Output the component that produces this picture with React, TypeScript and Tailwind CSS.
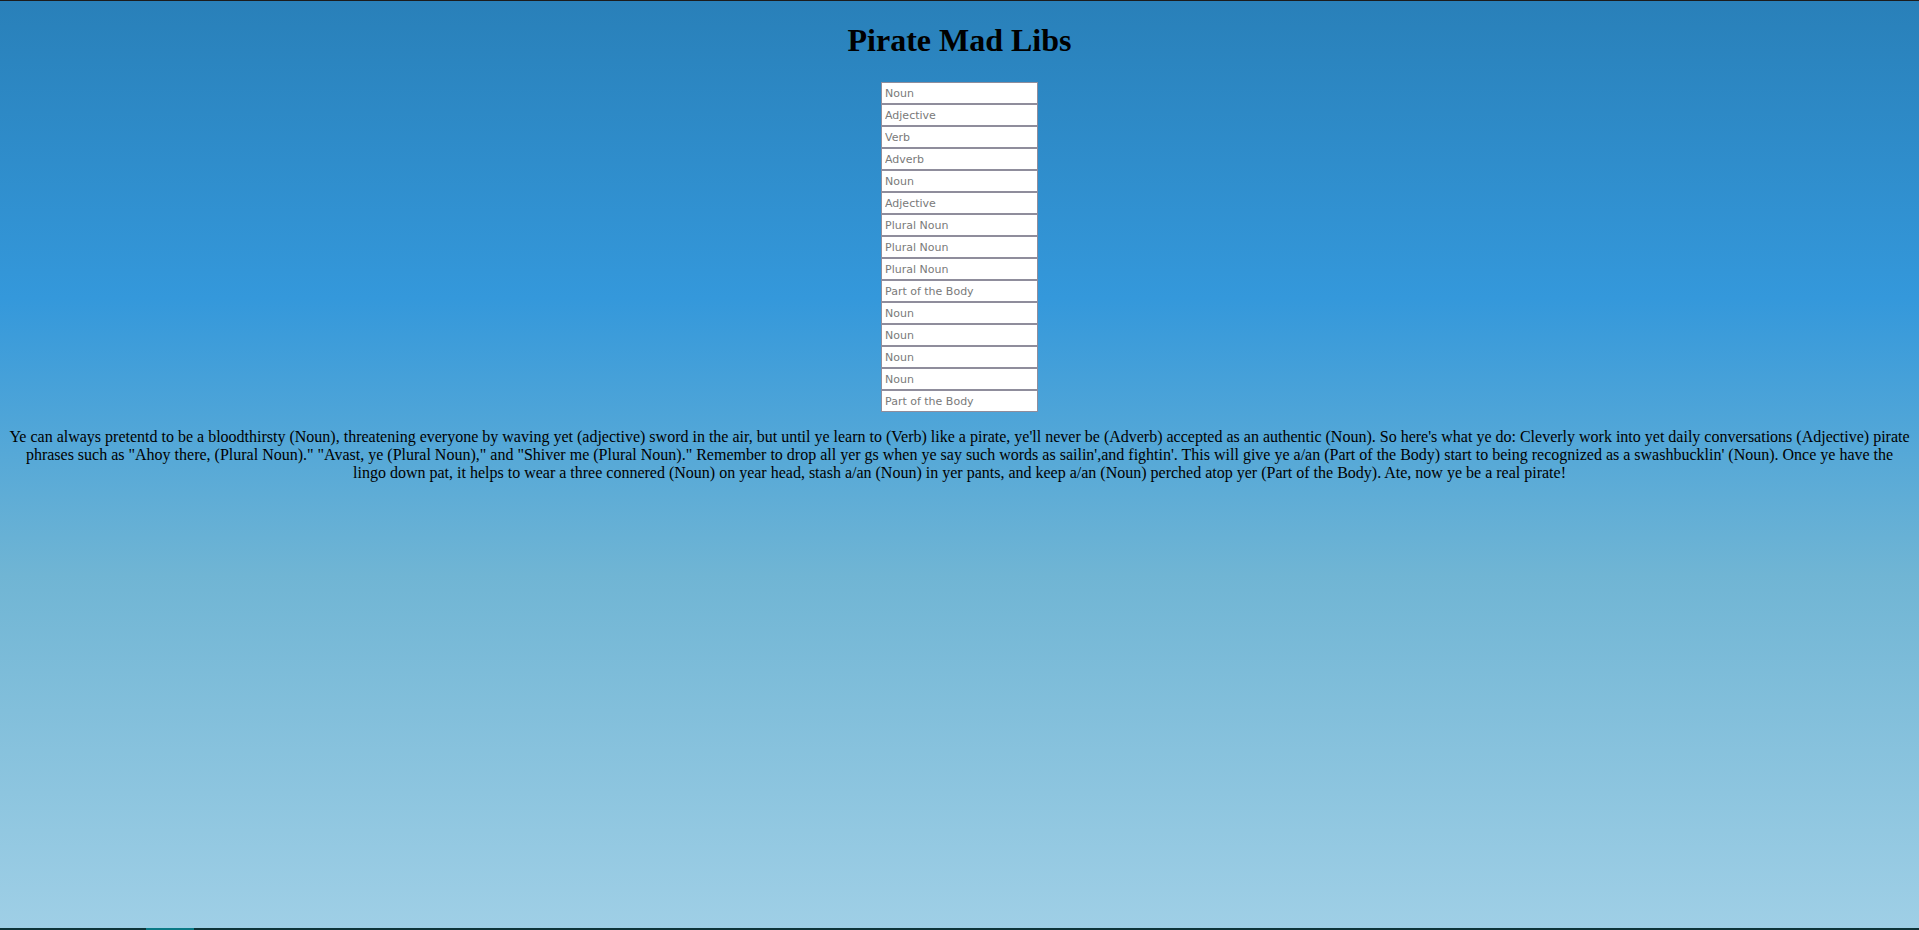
const fields = [
  "Noun",
  "Adjective",
  "Verb",
  "Adverb",
  "Noun",
  "Adjective",
  "Plural Noun",
  "Plural Noun",
  "Plural Noun",
  "Part of the Body",
  "Noun",
  "Noun",
  "Noun",
  "Noun",
  "Part of the Body",
];

export default function App() {
  return (
    <div className="flex h-[930px] flex-col">
      <div className="h-px bg-[#1c1c1c]" />
      <div className="flex-1 bg-[linear-gradient(to_bottom,#2980b9_0%,#3498db_32%,#70b5d4_62%,#9fcfe6_100%)] px-2 font-['Liberation_Serif',serif] text-black">
        <h1 className="pt-[21px] pb-[23px] text-center text-[32px] leading-[37px] font-bold">
          Pirate Mad Libs
        </h1>
        <form className="flex flex-col items-center">
          {fields.map((f, i) => (
            <input
              key={i}
              type="text"
              placeholder={f}
              className="block h-[22px] w-[157px] border border-[#8f8d9c] bg-white pl-[3px] font-['DejaVu_Sans',sans-serif] text-[11px] text-black outline-none placeholder:text-[#7a7a7a]"
            />
          ))}
        </form>
        <p className="mt-4 text-center text-[16px] leading-[18px]">
          Ye can always pretentd to be a bloodthirsty (Noun), threatening everyone by waving yet
          (adjective) sword in the air, but until ye learn to (Verb) like a pirate, ye'll never be
          (Adverb) accepted as an authentic (Noun). So here's what ye do: Cleverly work into yet
          daily conversations (Adjective) pirate phrases such as "Ahoy there, (Plural Noun)."
          "Avast, ye (Plural Noun)," and "Shiver me (Plural Noun)." Remember to drop all yer gs
          when ye say such words as sailin',and fightin'. This will give ye a/an (Part of the Body)
          start to being recognized as a swashbucklin' (Noun). Once ye have the lingo down pat, it
          helps to wear a three connered (Noun) on year head, stash a/an (Noun) in yer pants, and
          keep a/an (Noun) perched atop yer (Part of the Body). Ate, now ye be a real pirate!
        </p>
      </div>
      <div className="flex h-[2px] bg-[#0e3439]">
        <div className="ml-[146px] w-[48px] bg-[#0b7a86]" />
      </div>
    </div>
  );
}
